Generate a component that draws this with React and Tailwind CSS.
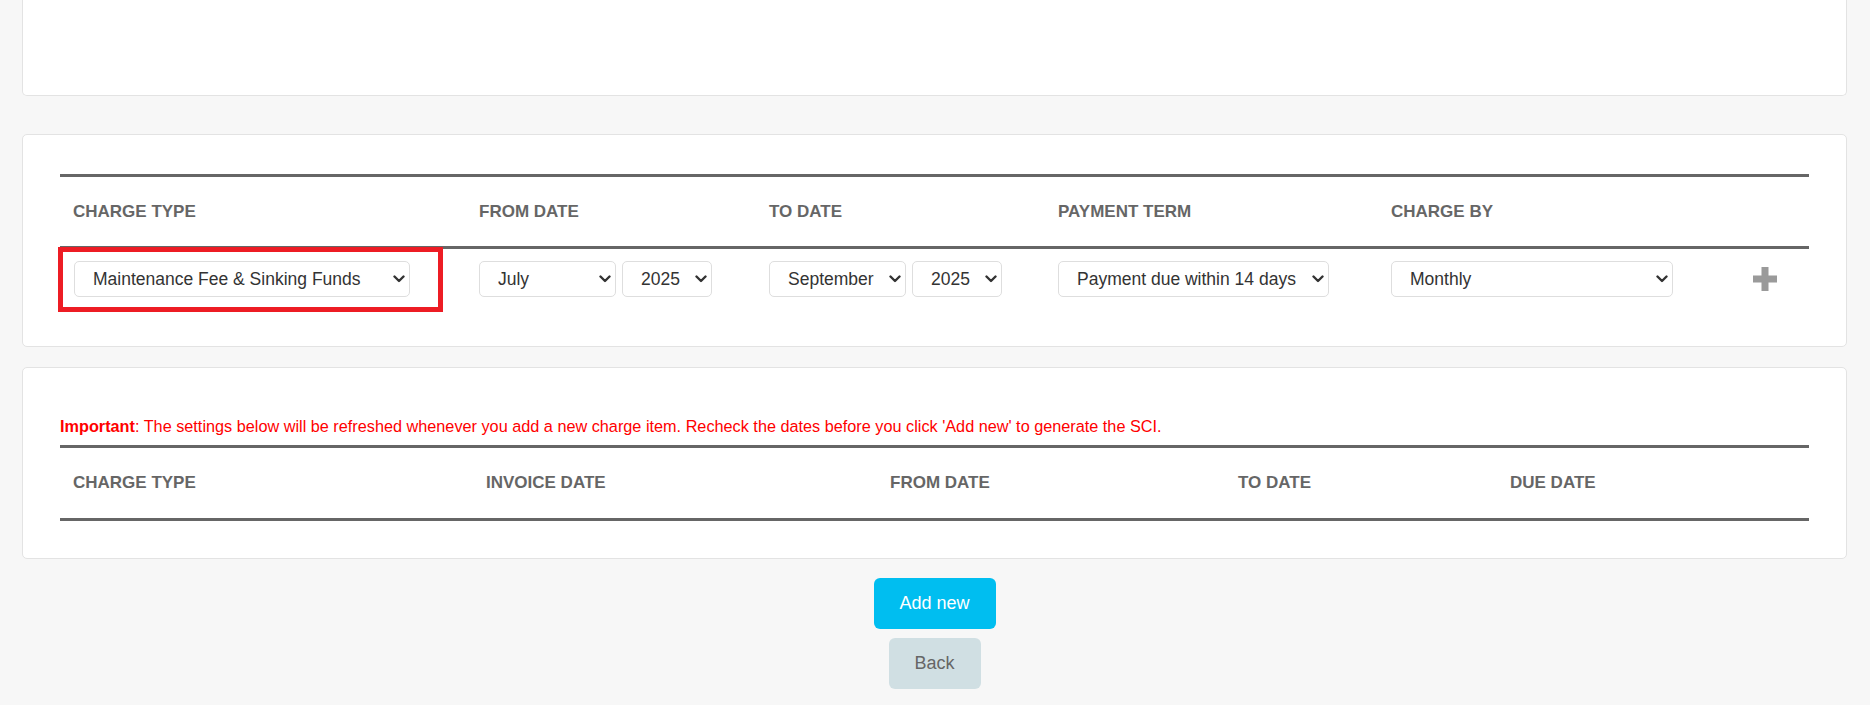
import React from 'react';

const months = ['January', 'February', 'March', 'April', 'May', 'June', 'July', 'August', 'September', 'October', 'November', 'December'];
const years = ['2024', '2025', '2026'];

function Chevron() {
  return (
    <svg width="12" height="8" viewBox="0 0 12 8" className="pointer-events-none absolute right-[5px] top-1/2 -translate-y-1/2">
      <path d="M1.5 1.5l4.5 4.5 4.5-4.5" fill="none" stroke="#333" strokeWidth="2.4" strokeLinecap="round" strokeLinejoin="round" />
    </svg>
  );
}

function Select({ width, value, options }) {
  return (
    <div className="relative" style={{ width }}>
      <select
        defaultValue={value}
        className="h-[36px] w-full appearance-none rounded-[5px] border border-[#dedede] bg-white pl-[18px] pr-[22px] text-[17.5px] text-[#333] outline-none"
      >
        {options.map(o => <option key={o} value={o}>{o}</option>)}
      </select>
      <Chevron />
    </div>
  );
}

function PlusIcon() {
  return (
    <svg width="24" height="24" viewBox="0 0 24 24">
      <rect x="8.5" y="0" width="7" height="24" fill="#9a9a9a" />
      <rect x="0" y="8.5" width="24" height="7" fill="#9a9a9a" />
    </svg>
  );
}

const th = 'pl-[13px] text-[17px] font-bold text-[#666] uppercase';

export default function App() {
  return (
    <div className="min-h-[705px] bg-[#f7f7f7] pl-[22px] pr-[23px] font-['Liberation_Sans',Arial,sans-serif]">
      {/* top card, its head is scrolled off */}
      <div className="h-[96px] rounded-b-[5px] border-x border-b border-[#e3e3e3] bg-white" />

      {/* charge item entry */}
      <div className="relative mt-[38px] rounded-[5px] border border-[#e3e3e3] bg-white px-[37px] pt-[39px] pb-[37px]">
        <div className="grid h-[75px] grid-cols-[406px_290px_289px_333px_362px_1fr] items-center border-y-[3px] border-[#666]">
          <div className={th}>Charge Type</div>
          <div className={th}>From Date</div>
          <div className={th}>To Date</div>
          <div className={th}>Payment Term</div>
          <div className={th}>Charge By</div>
          <div />
        </div>
        <div className="grid grid-cols-[406px_290px_289px_333px_362px_1fr] items-center pt-[12px] pb-[12px]">
          <div className="pl-[14px]">
            <Select width={336} value="Maintenance Fee & Sinking Funds" options={['Maintenance Fee & Sinking Funds', 'Maintenance Fee', 'Sinking Funds']} />
          </div>
          <div className="flex gap-[6px] pl-[13px]">
            <Select width={137} value="July" options={months} />
            <Select width={90} value="2025" options={years} />
          </div>
          <div className="flex gap-[6px] pl-[13px]">
            <Select width={137} value="September" options={months} />
            <Select width={90} value="2025" options={years} />
          </div>
          <div className="pl-[13px]">
            <Select width={271} value="Payment due within 14 days" options={['Payment due within 7 days', 'Payment due within 14 days', 'Payment due within 30 days']} />
          </div>
          <div className="pl-[13px]">
            <Select width={282} value="Monthly" options={['Monthly', 'Quarterly', 'Yearly']} />
          </div>
          <div className="pl-[13px]">
            <PlusIcon />
          </div>
        </div>
        {/* annotation box */}
        <div className="pointer-events-none absolute left-[35px] top-[112px] h-[65px] w-[385px] border-[5px] border-[#ed1c24]" />
      </div>

      {/* generated items */}
      <div className="mt-[20px] rounded-[5px] border border-[#e3e3e3] bg-white px-[37px] pt-[48px] pb-[37px]">
        <p className="mb-[9px] text-[16.25px] leading-[20px] text-[#ff0000]">
          <span className="font-bold">Important</span>: The settings below will be refreshed whenever you add a new charge item. Recheck the dates before you click 'Add new' to generate the SCI.
        </p>
        <div className="grid h-[76px] grid-cols-[413px_404px_348px_272px_1fr] items-center border-y-[3px] border-[#666]">
          <div className={th}>Charge Type</div>
          <div className={th}>Invoice Date</div>
          <div className={th}>From Date</div>
          <div className={th}>To Date</div>
          <div className={th}>Due Date</div>
        </div>
      </div>

      <div className="flex flex-col items-center pt-[19px] pb-[16px]">
        <button className="h-[51px] w-[122px] rounded-[6px] bg-[#00bef0] text-[18px] text-white">Add new</button>
        <button className="mt-[9px] h-[51px] w-[92px] rounded-[6px] bg-[#d0dfe3] text-[18px] text-[#666]">Back</button>
      </div>
    </div>
  );
}
